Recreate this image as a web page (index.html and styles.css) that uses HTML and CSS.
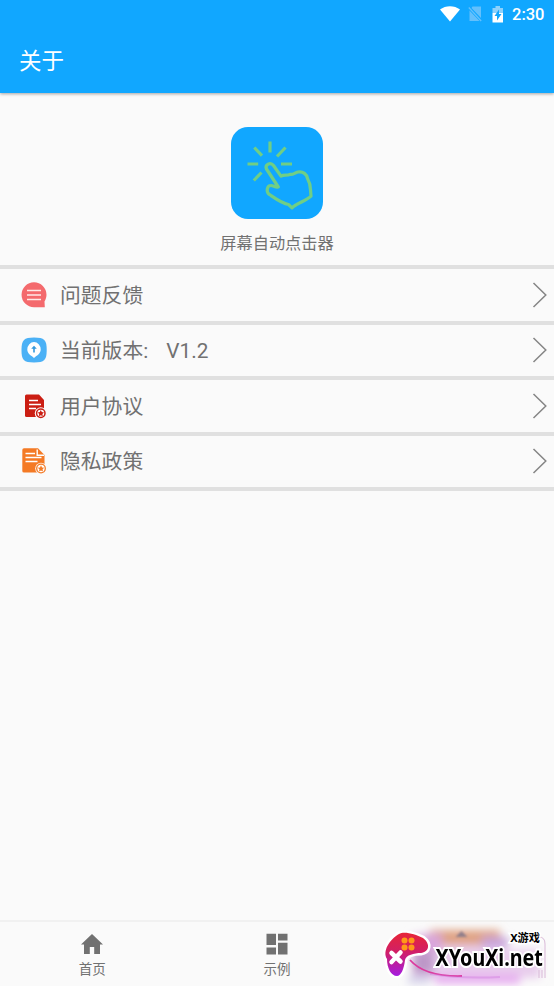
FILE: index.html
```html
<!DOCTYPE html>
<html lang="zh-CN">
<head>
<meta charset="utf-8">
<title>关于</title>
<link rel="stylesheet" href="styles.css">
</head>
<body>
<div class="screen">
  <header class="header">
    <div class="status">
      <svg class="wifi" width="20" height="16" viewBox="0 0 20 16"><path d="M0 3.500C5.500-1 14.500-1 20 3.500L10 15.500Z" fill="#fff"/></svg>
      <svg class="sim" width="14" height="16" viewBox="0 0 14 16"><path d="M4.500.5H13V12L3.500 2ZM1.500 4.500 11.500 15H1.500Z" fill="#63c0fc"/><path d="M.8 1.500 13.200 15" stroke="#63c0fc" stroke-width="1.300"/></svg>
      <svg class="battery" width="12" height="17" viewBox="0 0 12 17"><path d="M3.500 0h4.500v2H11v5H.5V2h3Z" fill="#8dd1fc"/><path d="M.5 7H11v9.500H.5Z" fill="#fff"/><path d="M7 3.500 2.500 10H5v4.500L9.500 8H7Z" fill="#10a7ff"/></svg>
      <span class="time">2:30</span>
    </div>
    <h1 class="title">关于</h1>
  </header>

  <main class="main">
    <section class="app">
      <svg class="app-icon" width="92" height="92" viewBox="0 0 92 92">
        <rect width="92" height="92" rx="17" fill="#11a7ff"/>
        <g fill="none" stroke="#70ce85" stroke-width="3.200" stroke-linejoin="round">
          <path d="M39 14.500V25.500M23.300 20.500 31 28.700M54.500 20.500 46 29.500M16.500 37H27.200M50 37H61M30.500 45.500 22.800 53.500"/>
          <path d="M35.500 42C33.500 37.500 39.500 34.500 42.500 38.500L50 49.200C53 47.300 56 49 59 47.300C62 48 63.500 45.800 67 45C72 44 76 47.500 76.500 51.500C78.500 55 79.500 59 79.500 63L80 69.200C75 74 66 76 61 80.800L57.500 77.500C51 76.500 43 70.500 38.500 67.500C35 65.500 35.500 58.500 40 58.500C42.500 58.500 44 60.500 47.300 60L35.500 42Z"/>
        </g>
      </svg>
      <p class="app-name">屏幕自动点击器</p>
    </section>

    <ul class="list">
      <li class="row">
        <svg class="icon" width="28" height="28" viewBox="0 0 28 28"><path d="M14 1.300a12.500 12.500 0 0 1 12.500 12.500c0 2.500-.8 4.700-2 6.700l.3 5.700H14A12.450 12.450 0 0 1 14 1.300Z" fill="#f46a6d"/><path d="M7 9.500H21M7 14H21M7 18.500H21" stroke="#ffe9e7" stroke-width="1.300"/></svg>
        <span class="label">问题反馈</span>
        <svg class="arrow" width="16" height="26" viewBox="0 0 16 26"><path d="M1.500 1 13.800 13 1.500 25"/></svg>
      </li>
      <li class="row">
        <svg class="icon" width="28" height="28" viewBox="0 0 28 28"><path d="M14 1.500C24.500 1.500 26.700 4 26.700 14S24.500 26.500 14 26.500 1.500 24 1.500 14 4 1.500 14 1.500Z" fill="#4bb1f6"/><path d="M14 6a6.700 7.500 0 0 1 6.700 7.400c0 3.300-2.700 5.600-4.700 6.800L14 22l-2-1.800c-2-1.200-4.700-3.500-4.700-6.800A6.700 7.500 0 0 1 14 6Z" fill="#fff"/><path d="m14 9.800 2.800 3h-2V16.500h-1.600v-3.700h-2Z" fill="#3398dc"/></svg>
        <span class="label">当前版本:</span><span class="version">V1.2</span>
        <svg class="arrow" width="16" height="26" viewBox="0 0 16 26"><path d="M1.500 1 13.800 13 1.500 25"/></svg>
      </li>
      <li class="row">
        <svg class="icon" width="28" height="28" viewBox="0 0 28 28"><path d="M6.500 2.500H19L24 8V25H6.500Q5 25 5 23.500V4Q5 2.500 6.500 2.500Z" fill="#cb1e13"/><path d="M9 8.500H18M9 12.500H21M9 16.500H16" stroke="#fff" stroke-width="1.700"/><circle cx="20.800" cy="21.200" r="6" fill="#fafafa"/><circle cx="20.800" cy="21.200" r="4.200" fill="#fff" stroke="#cb1e13" stroke-width="1.500"/><path d="m20.800 18 1 2.100 2.200.3-1.600 1.600.4 2.200-2-1-2 1 .4-2.200-1.600-1.600 2.200-.3Z" fill="#cb1e13"/></svg>
        <span class="label">用户协议</span>
        <svg class="arrow" width="16" height="26" viewBox="0 0 16 26"><path d="M1.500 1 13.800 13 1.500 25"/></svg>
      </li>
      <li class="row">
        <svg class="icon" width="28" height="28" viewBox="0 0 28 28"><path d="M4 1.300H18L24.500 8V25.500H4Q2.300 25.500 2.300 24V3Q2.300 1.300 4 1.300Z" fill="#f47a25"/><path d="M17.200 2.500V8.300H24M5.500 6.500H15M5.500 10.500H21.500M5.500 14.500H17.500" fill="none" stroke="#fff" stroke-width="1.400"/><circle cx="21" cy="21.500" r="5.800" fill="#fafafa"/><circle cx="21" cy="21.500" r="4.300" fill="#fff" stroke="#f47a25" stroke-width="1.300"/><path d="m21 18.300 1 2.100 2.200.3-1.600 1.600.4 2.200-2-1-2 1 .4-2.200-1.600-1.600 2.200-.3Z" fill="#f47a25"/></svg>
        <span class="label">隐私政策</span>
        <svg class="arrow" width="16" height="26" viewBox="0 0 16 26"><path d="M1.500 1 13.800 13 1.500 25"/></svg>
      </li>
    </ul>
  </main>

  <nav class="nav">
    <div class="tab">
      <svg width="24" height="22" viewBox="0 0 24 22"><path d="M12 1 1 11.500H4V21h5.800v-7h4.400v7H20v-9.500h3Z" fill="#717171"/></svg>
      <span>首页</span>
    </div>
    <div class="tab">
      <svg width="24" height="22" viewBox="0 0 24 22"><path d="M1.500.8H11V12H1.500ZM13 .8h9.500v6.700H13ZM1.500 14.500H11v7H1.500ZM13 9.800h9.500v11.700H13Z" fill="#717171"/></svg>
      <span>示例</span>
    </div>
    <div class="tab"></div>
  </nav>

  <div class="badge">
    <svg class="badge-art" width="180" height="66" viewBox="374 920 180 66">
      <defs>
        <linearGradient id="pad" x1="0" y1="0" x2="0" y2="1"><stop offset="0" stop-color="#e72538"/><stop offset=".45" stop-color="#d01f68"/><stop offset="1" stop-color="#a51ce0"/></linearGradient>
        <filter id="soft" x="-20%" y="-40%" width="140%" height="180%"><feGaussianBlur stdDeviation="4.500"/></filter>
        <filter id="light" x="-50%" y="-50%" width="200%" height="200%"><feGaussianBlur stdDeviation="1"/></filter>
      </defs>
      <g filter="url(#soft)">
        <path d="M412 934H500V950H540V978H412Z" fill="#e8cdec"/>
        <path d="M430 930H500V945H430Z" fill="#dfa283"/>
        <path d="M420 934H442V952H420Z" fill="#d9a6dc"/>
        <path d="M482 937H508V948H482Z" fill="#c8a4dc"/>
        <path d="M413 952H434V974H413Z" fill="#bd97c8"/>
        <path d="M435 974H520V984H435Z" fill="#e7aef0"/>
        <path d="M408 976H430V984H408Z" fill="#d5d3ea"/>
      </g>
      <path d="m461.500 931 6 6h-12Z" fill="#7d7389" opacity=".8" filter="url(#light)"/>
      <path d="M410 960Q425 977 462 976" fill="none" stroke="#dc3a9e" stroke-width="1.800"/>
      <path d="M430 974Q462 979 500 977" fill="none" stroke="#cf76dc" stroke-width="2" opacity=".4"/>
      <path d="M539 937Q545 937 545 944V978M539 970V978M542 970V978" fill="none" stroke="#d9b9d8" stroke-width="1"/>
      <path d="M399 934C404 931 415 934 423 938C431 944 429 952 421 953C414 953 406 955 405 960C404 969 401 976 397 976C391 976 387 968 387 959C382 951 390 939 399 934Z" fill="url(#pad)" stroke="#fff" stroke-width="5" stroke-linejoin="round" paint-order="stroke"/>
      <g fill="#ff9919"><circle cx="404.500" cy="940.500" r="3"/><circle cx="411.500" cy="940.500" r="3"/><circle cx="404.500" cy="947.500" r="3"/><circle cx="411.500" cy="947.500" r="3"/></g>
      <path d="m391.500 953 9 8.500m0-9-9 9.500" stroke="#fff" stroke-width="4.500" stroke-linecap="round"/>
    </svg>
    <div class="badge-text">
      <span class="badge-sub">X游戏</span>
      <span class="badge-main">XYouXi.net</span>
    </div>
  </div>
</div>
</body>
</html>
```
FILE: styles.css
```css
* {
  box-sizing: border-box;
}

body {
  margin: 0;
  background: #fafafa;
  color: #717171;
  font-family: Roboto, "Noto Sans CJK SC", sans-serif;
}

.screen {
  position: relative;
  display: flex;
  flex-direction: column;
  height: 986px;
  overflow: hidden;
}

.header {
  flex: none;
  height: 93px;
  background: #11a7ff;
  color: #fff;
  box-shadow: 0 1px 3px rgba(0, 0, 0, 0.35);
}

.status {
  display: flex;
  align-items: center;
  justify-content: flex-end;
  height: 28px;
  padding-right: 9px;
}

.sim {
  margin-left: 8px;
}

.battery {
  margin-left: 10px;
}

.time {
  width: 33px;
  margin-left: 8px;
  padding-top: 1px;
  font-size: 16.5px;
  font-weight: 500;
  line-height: 28px;
  white-space: nowrap;
}

.title {
  margin: 0;
  padding: 0 19px;
  font-size: 22.5px;
  font-weight: 400;
  line-height: 66px;
}

.main {
  flex: 1;
}

.app {
  display: flex;
  flex-direction: column;
  align-items: center;
  height: 172px;
  padding-top: 34px;
}

.app-name {
  margin: 13px 0 0;
  font-size: 16.2px;
  line-height: 24px;
}

.list {
  margin: 0;
  padding: 0;
  list-style: none;
  border-bottom: 4px solid #e0e0e0;
}

.row {
  display: flex;
  align-items: center;
  height: 55.5px;
  padding: 0 6px 0 20px;
  border-top: 4px solid #e0e0e0;
}

.icon,
.arrow {
  margin-top: -0.5px;
}

.label,
.version {
  padding-top: 2px;
  font-size: 20.8px;
  line-height: 30px;
}

.label {
  margin-left: 12px;
}

.version {
  margin-left: 18px;
}

.arrow {
  margin-left: auto;
  fill: none;
  stroke: #858585;
  stroke-width: 1.5;
}

.nav {
  display: flex;
  flex: none;
  height: 66px;
  border-top: 2px solid #f1f1f1;
}

.tab {
  display: flex;
  flex: 1;
  flex-direction: column;
  align-items: center;
  padding-top: 11px;
  font-size: 13.5px;
  line-height: 20px;
}

.tab span {
  margin-top: 4px;
}

.badge {
  position: absolute;
  right: 0;
  bottom: 0;
  display: grid;
  width: 180px;
  height: 66px;
}

.badge-art,
.badge-text {
  grid-area: 1 / 1;
}

.badge-text {
  z-index: 1;
  display: flex;
  flex-direction: column;
  align-items: flex-end;
  padding: 11px 11px 0 0;
  color: #000;
  font-family: "Noto Sans", "Noto Sans CJK SC", sans-serif;
  font-weight: 700;
  white-space: nowrap;
  -webkit-text-stroke: 4px #fff;
  paint-order: stroke fill;
}

.badge-sub {
  margin-right: 3px;
  font-size: 11.2px;
  line-height: 14px;
  -webkit-text-stroke-width: 3px;
}

.badge-main {
  font-size: 24px;
  line-height: 24px;
  transform: scaleX(0.82);
  transform-origin: right center;
}
```
